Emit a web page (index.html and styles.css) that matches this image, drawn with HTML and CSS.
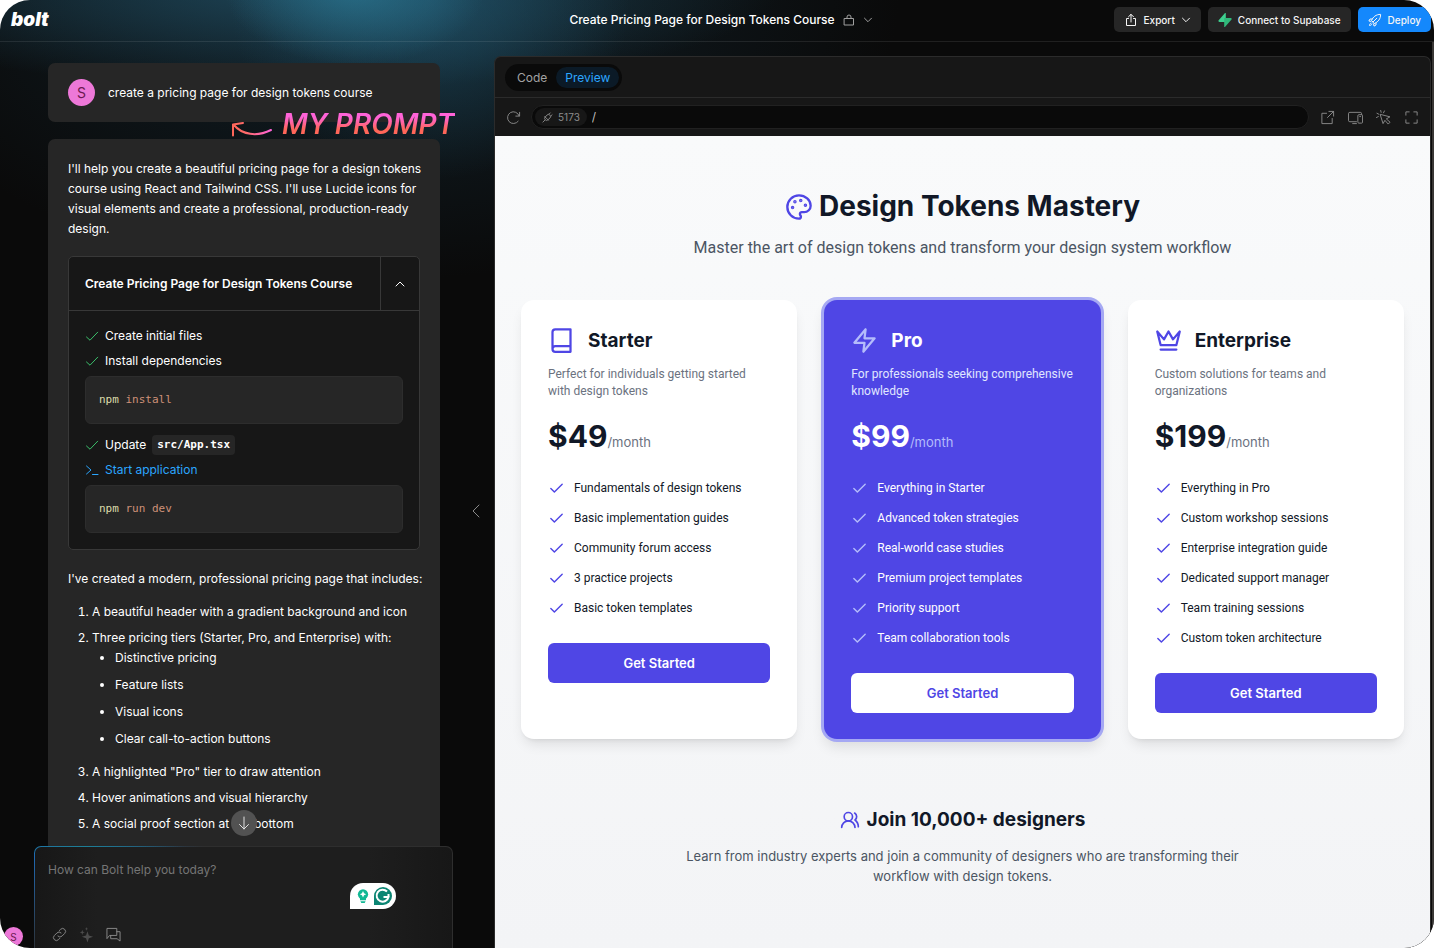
FILE: index.html
```html
<!DOCTYPE html>
<html lang="en">
<head>
<meta charset="utf-8">
<title>Create Pricing Page for Design Tokens Course</title>
<link rel="stylesheet" href="styles.css">
</head>
<body>
<svg class="sprite" aria-hidden="true">
  <symbol id="check" viewBox="0 0 24 24"><path d="M20 6 9 17l-5-5"/></symbol>
  <symbol id="tick" viewBox="0 0 14 14"><path d="M1.5 8 5 11.2 12.700 3.200"/></symbol>
  <symbol id="down" viewBox="0 0 10 10"><path d="M1.500 3.200 5 6.700l3.500-3.500"/></symbol>
</svg>
<div class="app">
  <header class="topbar">
    <a class="logo" href="#">bolt</a>
    <div class="project">
      <span>Create Pricing Page for Design Tokens Course</span>
      <svg class="icon lock" viewBox="0 0 12 12"><path d="M1.500 4.500h9v6.500h-9zM4 4.500V3a2 2 0 0 1 4 0v1.500"/></svg>
      <svg class="icon caret"><use href="#down"/></svg>
    </div>
    <div class="actions">
      <button class="btn"><svg class="icon" viewBox="0 0 14 14"><path d="M4.500 5.500h-2v7h9v-7h-2M7 9V1.500M4.500 3.800 7 1.300l2.500 2.500"/></svg>Export<svg class="icon caret"><use href="#down"/></svg></button>
      <button class="btn"><svg class="icon bolt" viewBox="0 0 14 14"><path class="bolt-a" d="M7.800.300v8.700H1.500C.3 9 0 8 .7 7.200L6.800.200c.4-.5 1-.3 1 .1z"/><path class="bolt-b" d="M6.200 13.700V5h6.300c1.200 0 1.500 1 .8 1.800l-6.100 7c-.4.500-1 .3-1-.1z"/></svg>Connect to Supabase</button>
      <button class="btn primary"><svg class="icon" viewBox="0 0 14 14"><path d="M5 9 3.500 7.500C5 4 8 1.300 12.600 1.400 12.700 6 10 9 6.500 10.500zM4.200 6H2L.900 8l2 .4M8 9.800V12l-2 1.100-.4-2M8.800 5.200 5 9M3 10c-1 .3-1.500 1.500-1.500 2.500C2.500 12.500 3.700 12 4 11"/></svg>Deploy</button>
    </div>
  </header>

  <main class="workspace">
    <section class="chat">
      <div class="messages">
        <article class="message user">
          <span class="avatar">S</span>
          <p>create a pricing page for design tokens course</p>
        </article>
        <article class="message">
          <p>I'll help you create a beautiful pricing page for a design tokens course using React and Tailwind CSS. I'll use Lucide icons for visual elements and create a professional, production-ready design.</p>
          <section class="artifact">
            <div class="artifact-head">
              <h2>Create Pricing Page for Design Tokens Course</h2>
              <button aria-label="Collapse steps"><svg class="icon" viewBox="0 0 10 10"><path d="M1 7l4-4 4 4"/></svg></button>
            </div>
            <div class="steps">
              <div class="step"><svg class="icon"><use href="#tick"/></svg>Create initial files</div>
              <div class="step"><svg class="icon"><use href="#tick"/></svg>Install dependencies</div>
              <pre><b>npm</b> install</pre>
              <div class="step spaced"><svg class="icon"><use href="#tick"/></svg>Update <code>src/App.tsx</code></div>
              <div class="step running"><svg class="icon" viewBox="0 0 14 14"><path d="M1.500 3 6 7l-4.500 4M7.500 11.500h5.500"/></svg>Start application</div>
              <pre><b>npm</b> run dev</pre>
            </div>
          </section>
          <p>I've created a modern, professional pricing page that includes:</p>
          <ol>
            <li>A beautiful header with a gradient background and icon</li>
            <li>Three pricing tiers (Starter, Pro, and Enterprise) with:
              <ul>
                <li>Distinctive pricing</li>
                <li>Feature lists</li>
                <li>Visual icons</li>
                <li>Clear call-to-action buttons</li>
              </ul>
            </li>
            <li>A highlighted "Pro" tier to draw attention</li>
            <li>Hover animations and visual hierarchy</li>
            <li>A social proof section at the bottom</li>
          </ol>
        </article>
      </div>
      <button class="collapse" aria-label="Collapse chat"><svg class="icon" viewBox="0 0 10 14"><path d="M8 1 2 7l6 6"/></svg></button>

      <div class="note">
        <svg viewBox="0 0 44 20"><defs><linearGradient id="ink"><stop stop-color="#ff6659"/><stop offset=".35" stop-color="#ff6b6b"/><stop offset="1" stop-color="#ff63d8"/></linearGradient></defs><path stroke="url(#ink)" d="M13 3 3 4.500v11M3.500 4.500C12 15 27 17 41 10"/></svg>
        <span>MY PROMPT</span>
      </div>

      <button class="scroll-down" aria-label="Scroll to bottom"><svg class="icon" viewBox="0 0 14 14"><path d="M7 1v12M2.500 8.500 7 13l4.500-4.500"/></svg></button>
      <form class="composer">
        <textarea aria-label="Message" placeholder="How can Bolt help you today?"></textarea>
        <div class="tools">
          <button type="button" aria-label="Attach"><svg class="icon" viewBox="0 0 16 16"><path d="M6.300 9.700a3.100 3.100 0 0 0 4.400 0l2.800-2.800a3.100 3.100 0 0 0-4.400-4.400L7.700 3.900M9.700 6.300a3.100 3.100 0 0 0-4.400 0L2.500 9.100a3.100 3.100 0 0 0 4.400 4.400l1.400-1.400"/></svg></button>
          <button type="button" class="dim" aria-label="Enhance prompt"><svg class="icon solid" viewBox="0 0 16 16"><path d="M9 4.500 10.500 9 15 10.500 10.500 12 9 16.500 7.500 12 3 10.500 7.500 9zM3.500 3l.7 2 2 .7-2 .7-.7 2-.7-2-2-.7 2-.7zM8 0l.5 1.500L10 2l-1.500.5L8 4l-.5-1.500L6 2l1.500-.500z"/></svg></button>
          <button type="button" aria-label="Discuss"><svg class="icon" viewBox="0 0 16 16"><path d="M1 12V1.500h10.500V9H4.200zM5 9v3.500h6.800L15 15V5h-3.500"/></svg></button>
        </div>
        <div class="grammar">
          <svg viewBox="0 0 14 18"><circle cx="7" cy="7" r="6" fill="#11b894"/><path fill="#11b894" d="M3.500 11h7v3h-7zM4 15h6l-1 2.200H5z"/><path fill="#fff" d="m7 3.300 1.200 2.500L10.700 7 8.200 8.200 7 10.700 5.800 8.200 3.300 7l2.500-1.200z"/></svg>
          <svg class="g" viewBox="0 0 20 20"><path fill="#0b8573" d="M1 19V10a9 9 0 1 1 9 9z"/><path class="g-line" d="M14 5.500A6 6 0 1 0 15.500 11H10.500M15.500 8v3"/></svg>
        </div>
      </form>
      <span class="avatar corner">S</span>
    </section>

    <section class="panel">
      <div class="tabs">
        <div class="switch"><button>Code</button><button class="active">Preview</button></div>
      </div>
      <div class="address">
        <button aria-label="Reload"><svg class="icon" viewBox="0 0 16 16"><path d="M14.500 2.500v4h-4M14 6.300A6.300 6.300 0 1 0 13 12"/></svg></button>
        <div class="url">
          <span class="port"><svg class="icon" viewBox="0 0 12 12"><path d="m3 5 4 4M3.500 5.500 5.500 3.300a2 2 0 0 1 3 0l.2.200a2 2 0 0 1 0 3L6.500 8.500a2 2 0 0 1-3 0 2 2 0 0 1 0-3M3.300 8.700 1 11M7.500 2.500 9 1M9.500 4.500 11 3"/></svg>5173</span>
          <input aria-label="Path" value="/">
        </div>
        <button aria-label="Open in new tab"><svg class="icon" viewBox="0 0 16 16"><path d="M7 3.500H2v11h11V9M9.500 1.500h5v5M14.500 1.500 8 8"/></svg></button>
        <button aria-label="Devices"><svg class="icon" viewBox="0 0 16 16"><path d="M9 12.500H2q-1.500 0-1.500-1.500V4Q.5 2.500 2 2.500h11q1.500 0 1.500 1.500v1M5 14.500h4M10.500 6q0-1 1-1h3q1 0 1 1v7q0 1-1 1h-3q-1 0-1-1zM12.500 7h1"/></svg></button>
        <button aria-label="Inspect"><svg class="icon" viewBox="0 0 16 16"><path d="m4.500 5 3 9.500 2-3.500 3.500 4 2-2-4-3.500 3.500-2zM3 4.500 1 3.500M5.500 2.500l-.500-2M8 3l1-2M2.500 7 .5 8"/></svg></button>
        <button aria-label="Full screen"><svg class="icon" viewBox="0 0 16 16"><path d="M2 5.500V2h3.500M10.500 2H14v3.500M14 10.500V14h-3.500M5.500 14H2v-3.500"/></svg></button>
      </div>

      <div class="preview">
        <div class="hero">
          <h1><svg class="icon" viewBox="0 0 24 24"><g class="dots"><circle cx="13.500" cy="6.500" r=".5"/><circle cx="17.500" cy="10.500" r=".5"/><circle cx="8.500" cy="7.500" r=".5"/><circle cx="6.500" cy="12.500" r=".5"/></g><path d="M12 2C6.500 2 2 6.500 2 12s4.500 10 10 10c.926 0 1.648-.746 1.648-1.688 0-.437-.18-.835-.437-1.125-.29-.289-.438-.652-.438-1.125a1.640 1.640 0 0 1 1.668-1.668h1.996c3.051 0 5.555-2.503 5.555-5.554C21.965 6.012 17.461 2 12 2z"/></svg>Design Tokens Mastery</h1>
          <p>Master the art of design tokens and transform your design system workflow</p>
        </div>
        <div class="plans">
          <section class="plan">
            <h3><svg class="icon" viewBox="0 0 24 24"><path d="M4 19.500v-15A2.500 2.500 0 0 1 6.500 2H20v20H6.500a2.500 2.500 0 0 1 0-5H20"/></svg>Starter</h3>
            <p class="about">Perfect for individuals getting started with&nbsp;design tokens</p>
            <p class="price"><strong>$49</strong>/month</p>
            <ul>
              <li><svg class="icon"><use href="#check"/></svg>Fundamentals of design tokens</li>
              <li><svg class="icon"><use href="#check"/></svg>Basic implementation guides</li>
              <li><svg class="icon"><use href="#check"/></svg>Community forum access</li>
              <li><svg class="icon"><use href="#check"/></svg>3 practice projects</li>
              <li><svg class="icon"><use href="#check"/></svg>Basic token templates</li>
            </ul>
            <button>Get Started</button>
          </section>
          <section class="plan featured">
            <h3><svg class="icon" viewBox="0 0 24 24"><path d="M13 2 3 14h9l-1 8 10-12h-9z"/></svg>Pro</h3>
            <p class="about">For professionals seeking comprehensive knowledge</p>
            <p class="price"><strong>$99</strong>/month</p>
            <ul>
              <li><svg class="icon"><use href="#check"/></svg>Everything in Starter</li>
              <li><svg class="icon"><use href="#check"/></svg>Advanced token strategies</li>
              <li><svg class="icon"><use href="#check"/></svg>Real-world case studies</li>
              <li><svg class="icon"><use href="#check"/></svg>Premium project templates</li>
              <li><svg class="icon"><use href="#check"/></svg>Priority support</li>
              <li><svg class="icon"><use href="#check"/></svg>Team collaboration tools</li>
            </ul>
            <button>Get Started</button>
          </section>
          <section class="plan">
            <h3><svg class="icon" viewBox="0 0 24 24"><path d="m2 4 3 12h14l3-12-6 7-4-7-4 7zM5 20h14"/></svg>Enterprise</h3>
            <p class="about">Custom solutions for teams and organizations</p>
            <p class="price"><strong>$199</strong>/month</p>
            <ul>
              <li><svg class="icon"><use href="#check"/></svg>Everything in Pro</li>
              <li><svg class="icon"><use href="#check"/></svg>Custom workshop sessions</li>
              <li><svg class="icon"><use href="#check"/></svg>Enterprise integration guide</li>
              <li><svg class="icon"><use href="#check"/></svg>Dedicated support manager</li>
              <li><svg class="icon"><use href="#check"/></svg>Team training sessions</li>
              <li><svg class="icon"><use href="#check"/></svg>Custom token architecture</li>
            </ul>
            <button>Get Started</button>
          </section>
        </div>
        <div class="join">
          <h2><svg class="icon" viewBox="0 0 24 24"><path d="M18 21a8 8 0 0 0-16 0M22 20c0-3.370-2-6.500-4-8a5 5 0 0 0-.450-8.300"/><circle cx="10" cy="8" r="5"/></svg>Join 10,000+ designers</h2>
          <p>Learn from industry experts and join a community of designers who are transforming their workflow with design tokens.</p>
        </div>
      </div>
    </section>
  </main>
</div>
</body>
</html>
```
FILE: styles.css
```css
* { box-sizing: border-box; }
body { margin: 0; background: #fff; font-family: Inter, "Liberation Sans", sans-serif; font-size: 12px; line-height: 20px; }
h1, h2, h3, p, ul, ol, pre { margin: 0; padding: 0; }
button { font: inherit; color: inherit; background: none; border: 0; padding: 0; display: flex; align-items: center; justify-content: center; }
.sprite { position: absolute; width: 0; height: 0; }
.icon { display: block; flex: none; width: 14px; height: 14px; fill: none; stroke: currentColor; stroke-width: 1; stroke-linecap: round; stroke-linejoin: round; }
.caret { width: 10px; height: 10px; }

.app {
  height: 100vh; display: flex; flex-direction: column; overflow: hidden; border-radius: 30px; color: #fff;
  background:
    radial-gradient(ellipse 130px 75px at 355px -10px, rgba(44, 124, 152, .65), transparent),
    radial-gradient(ellipse 200px 180px at 430px 0, rgba(34, 90, 116, .55), transparent),
    radial-gradient(ellipse 480px 100px at 300px -10px, rgba(36, 88, 112, .65), transparent),
    radial-gradient(ellipse 520px 280px at 380px 0, rgba(22, 48, 62, .6), transparent),
    #0a0a0a;
}

.topbar { flex: none; height: 42px; display: grid; grid-template-columns: 1fr auto 1fr; align-items: center; padding: 0 3px 2px 11px; border-bottom: 1px solid rgba(255, 255, 255, .09); font-weight: 500; }
.logo { justify-self: start; color: #fff; text-decoration: none; font-size: 19px; font-weight: 900; font-style: italic; }
.project { display: flex; align-items: center; gap: 8px; }
.project .icon { color: #a0a0a0; }
.project .lock { width: 12px; height: 12px; }
.actions { justify-self: end; display: flex; gap: 7px; font-size: 10px; }
.btn { height: 25px; padding: 0 10px; gap: 6px; border-radius: 5px; background: #262626; color: #f5f5f5; }
.btn.primary { background: #1488fc; }
.btn .bolt { stroke: none; }
.bolt-a { fill: #3ecf8e; }
.bolt-b { fill: #30b87a; }

.workspace { flex: 1; min-height: 0; display: flex; padding-right: 1px; border-right: 2px solid #393735; }
.chat { position: relative; flex: 0 0 494px; display: flex; overflow: hidden; }
.messages { flex: 1; min-width: 0; display: flex; flex-direction: column; gap: 17px; padding: 21px 0 0 48px; }
.message { flex: none; padding: 20px 12px 20px 20px; border-radius: 7px; background: #262626; }
.message:last-child { min-height: 900px; }
.user { display: flex; align-items: center; gap: 13px; padding: 16px 20px; }
.avatar { display: flex; align-items: center; justify-content: center; width: 27px; height: 27px; border-radius: 50%; background: #ed78d8; color: #6b1850; font-size: 14px; }
.collapse { flex: 0 0 54px; padding-left: 18px; color: #8a8a8a; margin-top: 32px; }

.artifact { margin: 17px 8px 19px 0; border: 1px solid #383838; border-radius: 5px; background: #171717; overflow: hidden; }
.artifact-head { display: flex; height: 54px; border-bottom: 1px solid #383838; }
.artifact-head h2 { flex: 1; align-self: center; padding-left: 16px; font-size: 12px; font-weight: 600; }
.artifact-head button { width: 39px; border-left: 1px solid #383838; }
.artifact-head .icon { width: 10px; height: 10px; }
.steps { display: flex; flex-direction: column; gap: 5px; padding: 15px 16px 16px; }
.step { display: flex; align-items: center; gap: 6px; }
.step .icon { color: #3bbf6b; }
.spaced { margin-top: 6px; }
.step code { padding: 0 5px; border-radius: 4px; background: #262626; font: bold 11px/20px "DejaVu Sans Mono", monospace; }
.running, .step.running .icon { color: #2ba6ff; }
.steps pre { padding: 13px; border: 1px solid #2d2d2d; border-radius: 6px; background: #262626; color: #ce9178; font: 11px/20px "DejaVu Sans Mono", monospace; }
.steps pre b { color: #dcdcaa; font-weight: 400; }

.message ol { margin-top: 13px; padding-left: 24px; }
.message ol > li + li { margin-top: 6px; }
.message ul { padding-left: 23px; margin-bottom: 13px; list-style: disc; }
.message ul li + li { margin-top: 7px; }

.note { position: absolute; left: 230px; top: 65px; display: flex; align-items: center; gap: 8px; }
.note svg { width: 44px; height: 20px; margin-top: 12px; fill: none; stroke-width: 2; stroke-linecap: round; stroke-linejoin: round; }
.note span { font-size: 28px; line-height: 34px; font-style: italic; font-weight: 600; background: linear-gradient(#ff63d8 30%, #ff6659 65%); background-clip: text; color: transparent; }

.scroll-down { position: absolute; left: 231px; bottom: 112px; width: 26px; height: 26px; border-radius: 50%; background: #525252; color: #e0e0e0; }
.composer {
  position: absolute; left: 34px; right: 41px; bottom: 0; height: 102px; display: flex; flex-direction: column; padding: 13px 13px 6px; border: 1px solid transparent; border-bottom: 0; border-radius: 7px 7px 0 0;
  background:
    linear-gradient(90deg, #171717, #1e1e1e 15%, #1e1e1e 80%, #171717) padding-box,
    radial-gradient(ellipse 100px 12px at 50px 0, #1d7f96, transparent) border-box,
    radial-gradient(ellipse 170px 110px at 0 0, #1f6fc0, transparent) border-box,
    #2e2e2e border-box;
}
.composer textarea { flex: 1; padding: 0; border: 0; background: none; resize: none; outline: 0; color: #fff; font: inherit; }
.composer textarea::placeholder { color: #757575; }
.tools { display: flex; gap: 12px; padding-left: 4px; color: #8c8c8c; }
.tools .icon { width: 15px; height: 15px; }
.tools .dim { color: #4c4c4c; }
.icon.solid { fill: currentColor; stroke: none; overflow: visible; }
.grammar { position: absolute; right: 56px; top: 36px; display: flex; align-items: center; gap: 4px; padding: 3px 3px 3px 7px; border-radius: 13px 13px 13px 0; background: #fff; }
.grammar svg { width: 12px; height: 16px; }
.grammar .g { width: 20px; height: 20px; }
.g-line { fill: none; stroke: #fff; stroke-width: 2; }
.corner { position: absolute; left: 4px; bottom: 2px; width: 19px; height: 19px; font-size: 10px; }

.panel { flex: 1; min-width: 0; margin-top: 14px; display: flex; flex-direction: column; border: 1px solid #2b2b2b; border-bottom: 0; border-radius: 7px 7px 0 0; background: #171717; color: #8c8c8c; overflow: hidden; }
.tabs { padding: 7px 10px 6px; border-bottom: 1px solid #2b2b2b; }
.switch { display: inline-flex; padding: 3px; border-radius: 14px; background: #0a0a0a; vertical-align: top; color: #a3a3a3; }
.switch button { height: 21px; padding: 0 9px; border-radius: 11px; }
.switch .active { background: #0b1a27; color: #2ba6ff; }
.address { display: flex; align-items: center; gap: 13px; padding: 7px 11px; }
.address .icon { width: 15px; height: 15px; }
.url { flex: 1; display: flex; align-items: center; gap: 5px; height: 24px; margin: 0 -2px 0 -3px; padding: 0 3px; border: 1px solid #212121; border-radius: 12px; background: #0a0a0a; }
.port { display: flex; align-items: center; gap: 5px; height: 18px; padding: 0 7px; border-radius: 9px; background: #171717; font-size: 10px; }
.address .port .icon { width: 11px; height: 11px; }
.url input { flex: 1; min-width: 0; padding: 0; border: 0; outline: 0; background: none; color: #bdbdbd; font: inherit; }

.preview { flex: 1; min-height: 0; overflow: hidden; padding: 54px 26px 0; background: linear-gradient(#f9fafb, #f3f4f6); color: #111827; }
.hero { text-align: center; }
.hero h1 { display: flex; align-items: center; justify-content: center; gap: 6px; font-size: 28px; line-height: 33px; font-weight: 700; }
.hero .icon { width: 28px; height: 28px; stroke-width: 2; color: #4f46e5; }
.dots { fill: currentColor; }
.hero p { margin-top: 13px; font-family: Roboto, sans-serif; font-size: 16px; line-height: 24px; color: #4b5563; }
.plans { display: grid; grid-template-columns: repeat(3, minmax(0, 1fr)); gap: 27px; margin-top: 40px; }
.plan { display: flex; flex-direction: column; padding: 27px 27px 26px; border-radius: 13px; background: #fff; box-shadow: 0 8px 13px -3px rgba(0, 0, 0, .1), 0 3px 5px -3px rgba(0, 0, 0, .1); font-family: Roboto, sans-serif; }
.plan h3 { display: flex; align-items: center; gap: 13px; font-family: Inter, sans-serif; font-size: 19px; line-height: 27px; font-weight: 700; }
.plan .icon { color: #4f46e5; stroke-width: 2; }
.plan h3 .icon { width: 27px; height: 27px; }
.about { margin-top: 12px; line-height: 17px; color: #6b7280; }
.price { margin-top: 20px; font-family: Inter, sans-serif; font-size: 13px; line-height: 13px; color: #6b7280; }
.price strong { font-size: 30px; line-height: 33px; color: #111827; }
.plan ul { margin: 27px 0 26px; display: flex; flex-direction: column; gap: 13px; list-style: none; line-height: 17px; }
.plan li { display: flex; align-items: center; gap: 9px; }
.plan li .icon { width: 17px; height: 17px; }
.plan button { height: 40px; border-radius: 6px; background: #4f46e5; color: #fff; font-family: Inter, sans-serif; font-size: 13px; font-weight: 600; }
.plan.featured { background: #4f46e5; color: #fff; box-shadow: 0 0 0 3px #a5a8f3, 0 8px 13px rgba(0, 0, 0, .1); }
.featured .icon, .featured .price { color: #b4bcfb; }
.featured .about { color: #e0e7ff; }
.featured .price strong { color: #fff; }
.featured button { background: #fff; color: #4f46e5; }
.join { max-width: 560px; margin: 67px auto 0; text-align: center; }
.join h2 { display: flex; align-items: center; justify-content: center; gap: 7px; font-size: 19px; line-height: 27px; font-weight: 700; }
.join .icon { width: 20px; height: 20px; stroke-width: 2; color: #4f46e5; }
.join p { margin-top: 13px; font-size: 13px; color: #4b5563; }
```
